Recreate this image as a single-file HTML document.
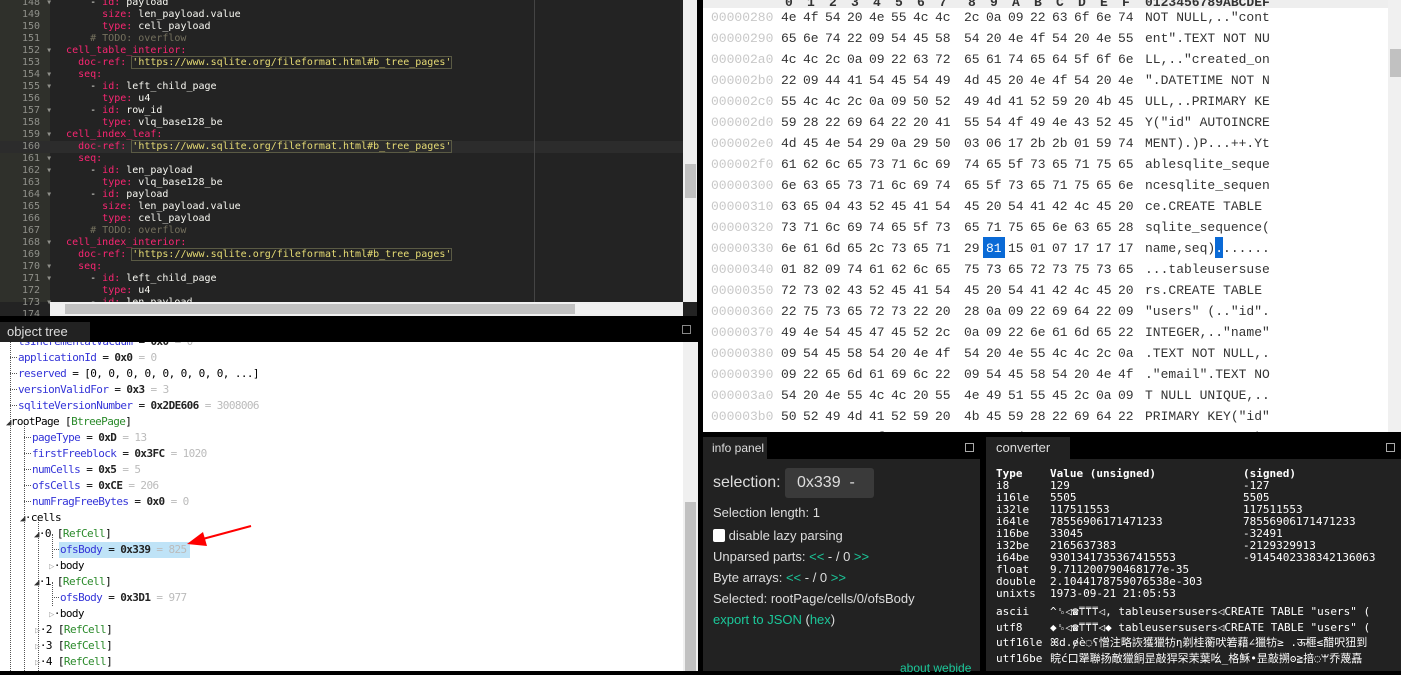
<!DOCTYPE html>
<html><head><meta charset="utf-8"><style>
*{margin:0;padding:0;box-sizing:border-box}
body{width:1401px;height:671px;overflow:hidden;background:#000;position:relative;font-family:"Liberation Sans",sans-serif}
.abs{position:absolute}
#ed{left:0;top:0;width:697px;height:316px;background:#232323;overflow:hidden}
#gut{left:0;top:0;width:50px;height:302px;background:#2f302b}
.ln{position:absolute;left:0;width:50px;font:10px "DejaVu Sans Mono",monospace;color:#8f908a;line-height:12px;padding-left:22px;white-space:pre}
.cl{position:absolute;left:54px;font:10px "DejaVu Sans Mono",monospace;color:#f8f8f2;line-height:12px;white-space:pre}
.k{color:#f92672}.s{color:#e6db74;outline:1px solid #5a5a44}.c{color:#75715e}
#hex{left:703px;top:0;width:698px;height:432px;background:#fff;overflow:hidden;font:13px "Liberation Mono",monospace}
.hr{position:absolute;left:0;height:21px;line-height:21px;white-space:pre}
.off{position:absolute;left:8px;color:#c8c8c8}
.b{position:absolute;color:#333}
.asc{position:absolute;left:442px;color:#333}
.tree{font:11px "DejaVu Sans Mono",monospace;letter-spacing:-0.6px;line-height:16px;white-space:pre}
.tr{position:absolute;height:16px}
.h{display:inline-block;width:7px;height:8px;border-bottom:1px dotted #555;vertical-align:top;margin-right:1px}
.n{color:#3434d8}.v{color:#222;font-weight:bold}.d{color:#bbb}.g{color:#2a8a2a}
.pan{background:#222;color:#ddd;font-family:"Liberation Sans Narrow","Liberation Sans",sans-serif}
.cv{font:11px "DejaVu Sans Mono",monospace;color:#fff;line-height:12px;white-space:pre;position:absolute;left:10px}
.tri{font-size:9px;color:#333}
.trio{font-size:9px;color:#aaa}
</style></head><body>
<div id="ed" class="abs">
<div id="gut" class="abs"></div>
<div class="abs" style="left:0;top:141px;width:683px;height:12px;background:#2c2c2c"></div>
<div class="abs" style="left:534px;top:0;width:1px;height:302px;background:#444"></div>
<div class="ln" style="top:-3px">148 ▾
149
150
151
152 ▾
153
154 ▾
155 ▾
156
157 ▾
158
159 ▾
160
161 ▾
162 ▾
163
164 ▾
165
166
167
168 ▾
169
170 ▾
171 ▾
172
173 ▾
174</div>
<div class="cl" style="top:-3px">      - <span class="k">id:</span> payload
        <span class="k">size:</span> len_payload.value
        <span class="k">type:</span> cell_payload
      <span class="c"># TODO: overflow</span>
  <span class="k">cell_table_interior:</span>
    <span class="k">doc-ref:</span> <span class="s">'https://www.sqlite.org/fileformat.html#b_tree_pages'</span>
    <span class="k">seq:</span>
      - <span class="k">id:</span> left_child_page
        <span class="k">type:</span> u4
      - <span class="k">id:</span> row_id
        <span class="k">type:</span> vlq_base128_be
  <span class="k">cell_index_leaf:</span>
    <span class="k">doc-ref:</span> <span class="s">'https://www.sqlite.org/fileformat.html#b_tree_pages'</span>
    <span class="k">seq:</span>
      - <span class="k">id:</span> len_payload
        <span class="k">type:</span> vlq_base128_be
      - <span class="k">id:</span> payload
        <span class="k">size:</span> len_payload.value
        <span class="k">type:</span> cell_payload
      <span class="c"># TODO: overflow</span>
  <span class="k">cell_index_interior:</span>
    <span class="k">doc-ref:</span> <span class="s">'https://www.sqlite.org/fileformat.html#b_tree_pages'</span>
    <span class="k">seq:</span>
      - <span class="k">id:</span> left_child_page
        <span class="k">type:</span> u4
      - <span class="k">id:</span> len_payload
</div>
<div class="abs" style="left:683px;top:0;width:14px;height:302px;background:#f0f0f0"></div>
<div class="abs" style="left:685px;top:164px;width:11px;height:34px;background:#c1c1c1"></div>
<div class="abs" style="left:50px;top:302px;width:633px;height:14px;background:#f0f0f0"></div>
<div class="abs" style="left:65px;top:304px;width:510px;height:10px;background:#c1c1c1"></div>
<div class="abs" style="left:683px;top:302px;width:14px;height:14px;background:#232323"></div>
</div>

<!-- object tree -->
<div class="abs" style="left:0;top:322px;width:698px;height:20px;background:#000"></div>
<div class="abs pan" style="left:0;top:322px;width:90px;height:20px;font-size:13px;line-height:20px;padding-left:7px;color:#ddd">object tree</div>
<div class="abs" style="left:682px;top:325px;width:9px;height:9px;border:1px solid #888"></div>
<div class="abs tree" style="left:0;top:342px;width:683px;height:329px;background:#fff;overflow:hidden">
<div class="abs" style="left:10px;top:0;width:1px;height:329px;border-left:1px dotted #555"></div>
<div class="tr" style="left:10px;top:-8px"><span class="h"></span><span class="n">tsIncrementalVacuum</span> = <span class="v">0x0</span> <span class="d">= 0</span></div>
<div class="tr" style="left:10px;top:8px"><span class="h"></span><span class="n">applicationId</span> = <span class="v">0x0</span> <span class="d">= 0</span></div>
<div class="tr" style="left:10px;top:24px"><span class="h"></span><span class="n">reserved</span> = [0, 0, 0, 0, 0, 0, 0, 0, ...]</div>
<div class="tr" style="left:10px;top:40px"><span class="h"></span><span class="n">versionValidFor</span> = <span class="v">0x3</span> <span class="d">= 3</span></div>
<div class="tr" style="left:10px;top:56px"><span class="h"></span><span class="n">sqliteVersionNumber</span> = <span class="v">0x2DE606</span> <span class="d">= 3008006</span></div>
<div class="tr" style="left:6px;top:72px"><span class="tri">◢</span>rootPage [<span class="g">BtreePage</span>]</div>
<div class="abs" style="left:24px;top:80px;width:1px;height:249px;border-left:1px dotted #555"></div>
<div class="tr" style="left:24px;top:88px"><span class="h"></span><span class="n">pageType</span> = <span class="v">0xD</span> <span class="d">= 13</span></div>
<div class="tr" style="left:24px;top:104px"><span class="h"></span><span class="n">firstFreeblock</span> = <span class="v">0x3FC</span> <span class="d">= 1020</span></div>
<div class="tr" style="left:24px;top:120px"><span class="h"></span><span class="n">numCells</span> = <span class="v">0x5</span> <span class="d">= 5</span></div>
<div class="tr" style="left:24px;top:136px"><span class="h"></span><span class="n">ofsCells</span> = <span class="v">0xCE</span> <span class="d">= 206</span></div>
<div class="tr" style="left:24px;top:152px"><span class="h"></span><span class="n">numFragFreeBytes</span> = <span class="v">0x0</span> <span class="d">= 0</span></div>
<div class="tr" style="left:20px;top:168px"><span class="tri">◢</span>·cells</div>
<div class="abs" style="left:38px;top:176px;width:1px;height:153px;border-left:1px dotted #555"></div>
<div class="tr" style="left:34px;top:184px"><span class="tri">◢</span>·0 [<span class="g">RefCell</span>]</div>
<div class="abs" style="left:52px;top:192px;width:1px;height:24px;border-left:1px dotted #555"></div>
<div class="abs" style="left:59px;top:200px;width:131px;height:16px;background:#bfe3f7"></div>
<div class="tr" style="left:52px;top:200px"><span class="h"></span><span class="n">ofsBody</span> = <span class="v">0x339</span> <span class="d">= 825</span></div>
<div class="tr" style="left:49px;top:216px"><span class="trio">▷</span>·body</div>
<div class="tr" style="left:34px;top:232px"><span class="tri">◢</span>·1 [<span class="g">RefCell</span>]</div>
<div class="abs" style="left:52px;top:240px;width:1px;height:24px;border-left:1px dotted #555"></div>
<div class="tr" style="left:52px;top:248px"><span class="h"></span><span class="n">ofsBody</span> = <span class="v">0x3D1</span> <span class="d">= 977</span></div>
<div class="tr" style="left:49px;top:264px"><span class="trio">▷</span>·body</div>
<div class="tr" style="left:35px;top:280px"><span class="trio">▷</span>·2 [<span class="g">RefCell</span>]</div>
<div class="tr" style="left:35px;top:296px"><span class="trio">▷</span>·3 [<span class="g">RefCell</span>]</div>
<div class="tr" style="left:35px;top:312px"><span class="trio">▷</span>·4 [<span class="g">RefCell</span>]</div>
<svg class="abs" style="left:185px;top:180px" width="70" height="30"><line x1="66" y1="4" x2="14" y2="18" stroke="#f00" stroke-width="2"/><polygon points="2,22 18,10 22,24" fill="#f00"/></svg>
</div>
<div class="abs" style="left:683px;top:342px;width:15px;height:329px;background:#f0f0f0"></div>
<div class="abs" style="left:685px;top:502px;width:11px;height:169px;background:#c1c1c1"></div>

<!-- hex -->
<div id="hex" class="abs">
<div class="abs" style="left:0;top:0;width:698px;height:8px;background:#eee"></div>
<div id="hdr" class="hr" style="top:-8px;font-weight:bold;color:#333;width:698px"></div>
<div class="abs" style="left:280px;top:237px;width:22px;height:21px;background:#0a6ad6"></div>
<div class="abs" style="left:512px;top:237px;width:8px;height:21px;background:#0a6ad6"></div>
<div id="rows"></div>
<div class="abs" style="left:685px;top:0;width:13px;height:432px;background:#f0f0f0"></div>
<div class="abs" style="left:687px;top:49px;width:11px;height:28px;background:#c1c1c1"></div>
</div>

<!-- info panel -->
<div class="abs pan" style="left:703px;top:437px;width:277px;height:234px;background:#222"></div>
<div class="abs" style="left:767px;top:437px;width:213px;height:22px;background:#000"></div>
<div class="abs pan" style="left:703px;top:437px;width:64px;height:22px;font-size:12px;line-height:22px;padding-left:9px;white-space:nowrap">info panel</div>
<div class="abs" style="left:965px;top:443px;width:9px;height:9px;border:1px solid #aaa"></div>
<div class="abs pan" style="left:713px;top:470px;font-size:16px;line-height:26px;background:none">selection:</div>
<div class="abs pan" style="left:785px;top:468px;width:89px;height:30px;background:#3a3a3a;border-radius:3px;font-size:16px;line-height:30px;padding-left:12px">0x339&nbsp; -</div>
<div class="abs pan" style="left:713px;top:502px;font-size:13px;line-height:21px;background:none;width:260px">Selection length: 1<br>
<span style="display:inline-block;width:12px;height:13px;background:#fff;border-radius:2px;vertical-align:-2px;margin-top:6px"></span> disable lazy parsing<br>
<span style="display:inline-block;margin-top:0">Unparsed parts: <span style="color:#1bc89a">&lt;&lt;</span> - / 0 <span style="color:#1bc89a">&gt;&gt;</span></span><br>
Byte arrays: <span style="color:#1bc89a">&lt;&lt;</span> - / 0 <span style="color:#1bc89a">&gt;&gt;</span><br>
Selected: rootPage/cells/0/ofsBody<br>
<span style="color:#1bc89a">export to JSON</span> (<span style="color:#1bc89a">hex</span>)</div>
<div class="abs pan" style="left:900px;top:661px;font-size:12px;color:#1bc89a;background:none">about webide</div>

<!-- converter -->
<div class="abs pan" style="left:986px;top:437px;width:415px;height:234px;background:#222;overflow:hidden">
<div class="abs" style="left:84px;top:0;width:331px;height:22px;background:#000"></div>
<div class="abs" style="left:0;top:0;width:84px;height:22px;font-size:13px;line-height:22px;padding-left:10px">converter</div>
<div class="abs" style="left:400px;top:6px;width:9px;height:9px;border:1px solid #aaa"></div>
<div class="cv" style="top:31px"><b>Type</b>
i8
i16le
i32le
i64le
i16be
i32be
i64be
float
double
unixts</div>
<div class="cv" style="left:64px;top:31px"><b>Value (unsigned)</b>
129
5505
117511553
78556906171471233
33045
2165637383
9301341735367415553
9.711200790468177e-35
2.1044178759076538e-303
1973-09-21 21:05:53</div>
<div class="cv" style="left:257px;top:31px"><b>(signed)</b>
-127
5505
117511553
78556906171471233
-32491
-2129329913
-9145402338342136063</div>
<div class="cv" style="top:167px;line-height:15.5px">ascii
utf8
utf16le
utf16be</div>
<div class="cv" style="left:64px;top:167px;line-height:15.5px;font-family:'DejaVu Sans Mono','Noto Sans CJK SC',monospace">^␎◁☎⍑⍑⍑◁, tableusersusers◁CREATE TABLE "users" (
◆␎◁☎⍑⍑⍑◁◆ tableusersusers◁CREATE TABLE "users" (
ꕤd.ɇè◌ʕ憎注略詼獲獵牥η剃桂蘅吠箬藉∠獵牥≥ .ऊ榧≤醋呎狃到
睆ć⼝犟聯扬敵獵餇昰敲猂罙茉葉吆_格穌•昰敲搠ʘ≧揞◌ꕚ乔蔑嚞</div>
</div>

<script>
const rows=[
["00000280","4e 4f 54 20 4e 55 4c 4c","2c 0a 09 22 63 6f 6e 74",'NOT NULL,.."cont'],
["00000290","65 6e 74 22 09 54 45 58","54 20 4e 4f 54 20 4e 55",'ent".TEXT NOT NU'],
["000002a0","4c 4c 2c 0a 09 22 63 72","65 61 74 65 64 5f 6f 6e",'LL,.."created_on'],
["000002b0","22 09 44 41 54 45 54 49","4d 45 20 4e 4f 54 20 4e",'".DATETIME NOT N'],
["000002c0","55 4c 4c 2c 0a 09 50 52","49 4d 41 52 59 20 4b 45",'ULL,..PRIMARY KE'],
["000002d0","59 28 22 69 64 22 20 41","55 54 4f 49 4e 43 52 45",'Y("id" AUTOINCRE'],
["000002e0","4d 45 4e 54 29 0a 29 50","03 06 17 2b 2b 01 59 74",'MENT).)P...++.Yt'],
["000002f0","61 62 6c 65 73 71 6c 69","74 65 5f 73 65 71 75 65",'ablesqlite_seque'],
["00000300","6e 63 65 73 71 6c 69 74","65 5f 73 65 71 75 65 6e",'ncesqlite_sequen'],
["00000310","63 65 04 43 52 45 41 54","45 20 54 41 42 4c 45 20",'ce.CREATE TABLE '],
["00000320","73 71 6c 69 74 65 5f 73","65 71 75 65 6e 63 65 28",'sqlite_sequence('],
["00000330","6e 61 6d 65 2c 73 65 71","29 81 15 01 07 17 17 17",'name,seq).......'],
["00000340","01 82 09 74 61 62 6c 65","75 73 65 72 73 75 73 65",'...tableusersuse'],
["00000350","72 73 02 43 52 45 41 54","45 20 54 41 42 4c 45 20",'rs.CREATE TABLE '],
["00000360","22 75 73 65 72 73 22 20","28 0a 09 22 69 64 22 09",'"users" (.."id".'],
["00000370","49 4e 54 45 47 45 52 2c","0a 09 22 6e 61 6d 65 22",'INTEGER,.."name"'],
["00000380","09 54 45 58 54 20 4e 4f","54 20 4e 55 4c 4c 2c 0a",'.TEXT NOT NULL,.'],
["00000390","09 22 65 6d 61 69 6c 22","09 54 45 58 54 20 4e 4f",'."email".TEXT NO'],
["000003a0","54 20 4e 55 4c 4c 20 55","4e 49 51 55 45 2c 0a 09",'T NULL UNIQUE,..'],
["000003b0","50 52 49 4d 41 52 59 20","4b 45 59 28 22 69 64 22",'PRIMARY KEY("id"'],
["000003c0","20 41 55 54 4f 49 4e 43","52 45 4d 45 4e 54 29 0a",' AUTOINCREMENT).']];
let h='';
const X=j=>78+j*22+(j>=8?7:0);
let hd='';
'0123456789ABCDEF'.split('').forEach((c,j)=>{hd+='<span class="b" style="left:'+(X(j)+4)+'px">'+c+'</span>';});
hd+='<span class="asc">0123456789ABCDEF</span>';
document.getElementById('hdr').innerHTML=hd;
rows.forEach((r,i)=>{
 const t=7+i*21;
 h+='<div class="hr" style="top:'+t+'px"><span class="off">'+r[0]+'</span>';
 const bs=(r[1]+' '+r[2]).split(' ');
 bs.forEach((b,j)=>{const sel=(i==11&&j==9);h+='<span class="b" style="left:'+X(j)+'px;'+(sel?'color:#fff':'')+'">'+b+'</span>';});
 let a=r[3].replace(/&/g,'&amp;').replace(/</g,'&lt;');
 if(i==11){a='name,seq)<span style="color:#fff">.</span>......';}
 h+='<span class="asc">'+a+'</span></div>';
});
document.getElementById('rows').innerHTML=h;
</script>
</body></html>
